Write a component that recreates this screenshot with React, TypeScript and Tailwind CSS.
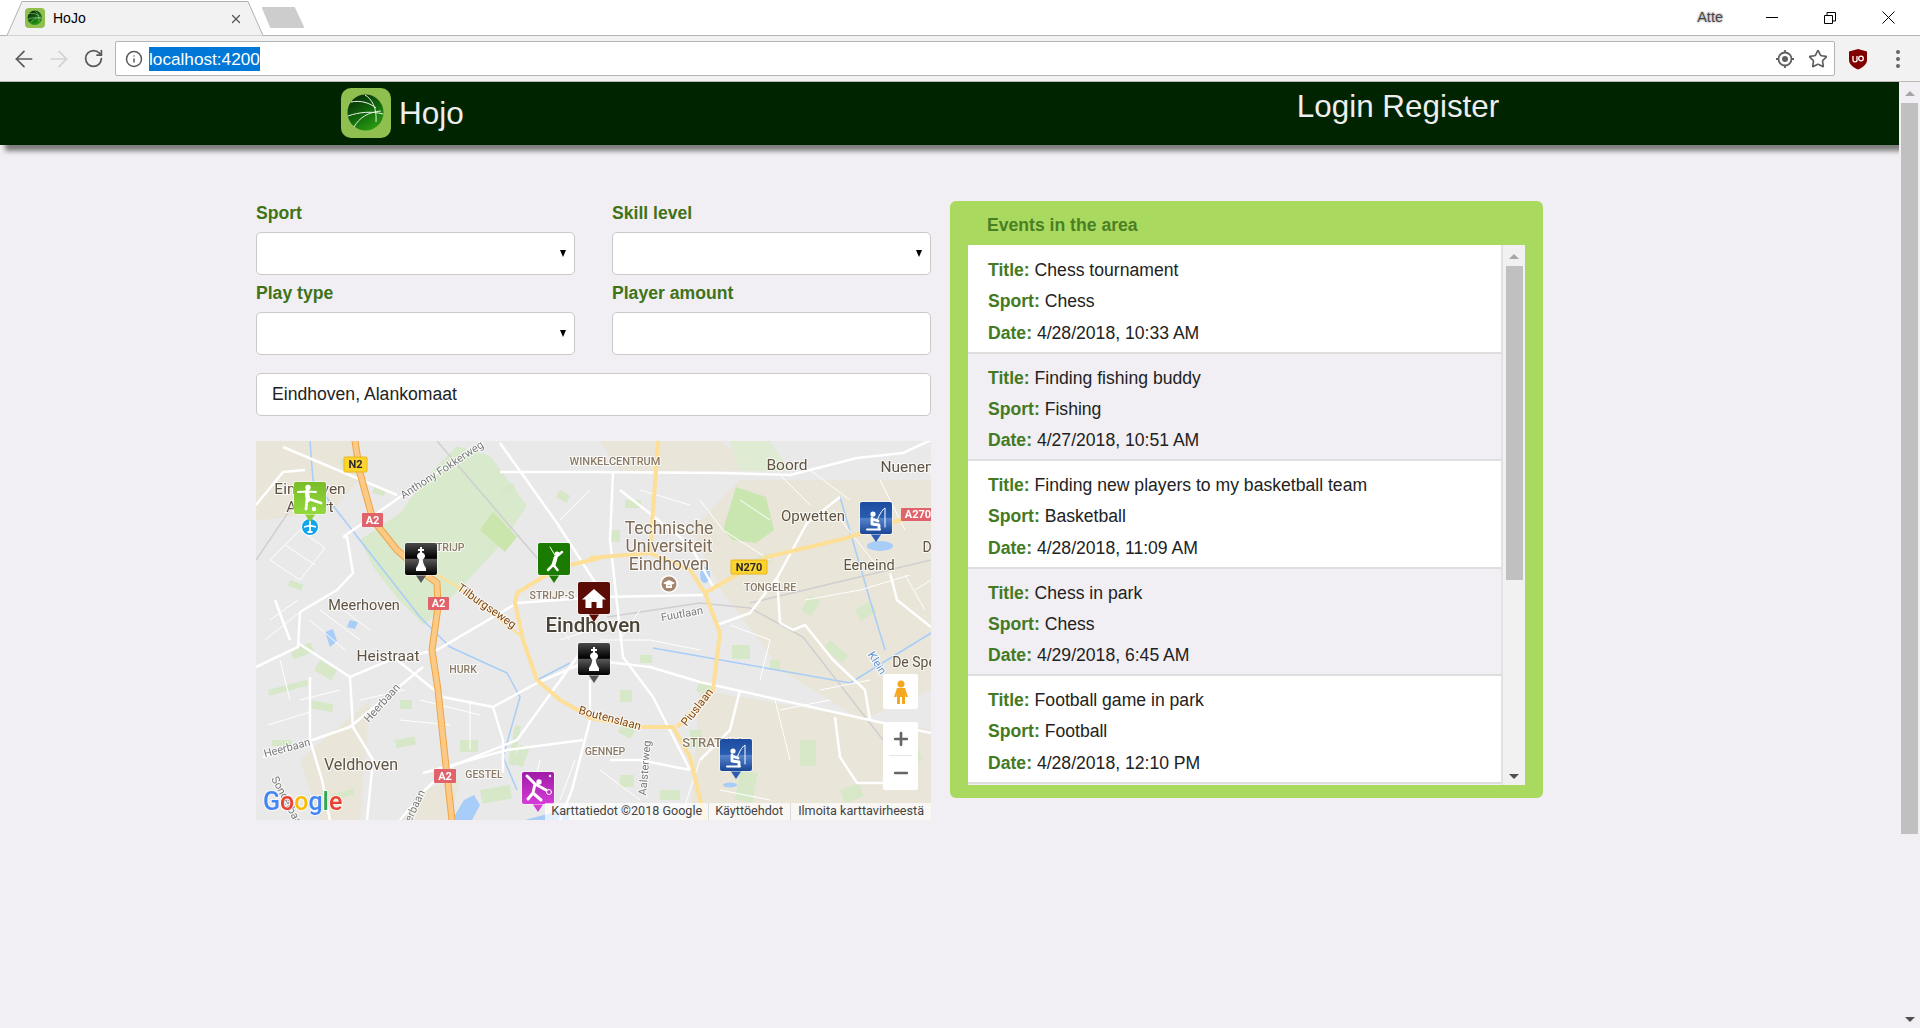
import { ArrowLeft, ArrowRight, Info, Minus, Plus, RotateCw, Star, X } from "lucide-react";
import type { ReactNode } from "react";

type Pt = [number, number];

const line = (points: Pt[]) =>
  "M" + points.map((p) => p[0] + " " + p[1]).join("L");

const events = [
  { title: "Chess tournament", sport: "Chess", date: "4/28/2018, 10:33 AM" },
  { title: "Finding fishing buddy", sport: "Fishing", date: "4/27/2018, 10:51 AM" },
  { title: "Finding new players to my basketball team", sport: "Basketball", date: "4/28/2018, 11:09 AM" },
  { title: "Chess in park", sport: "Chess", date: "4/29/2018, 6:45 AM" },
  { title: "Football game in park", sport: "Football", date: "4/28/2018, 12:10 PM" },
];

const whiteRoads: Pt[][] = [
  [[590, 472], [723, 473], [790, 475], [857, 458], [903, 453], [931, 440]],
  [[500, 472], [590, 472]],
  [[343, 537], [400, 497], [483, 443]],
  [[283, 447], [397, 495]],
  [[256, 505], [283, 472], [305, 470]],
  [[500, 443], [557, 523], [600, 590]],
  [[256, 667], [298, 647], [300, 612], [337, 590], [353, 573], [347, 537], [343, 537]],
  [[437, 650], [517, 603], [600, 597], [703, 595]],
  [[298, 643], [350, 677], [390, 660], [437, 650]],
  [[397, 660], [443, 697], [493, 707], [537, 683], [590, 660]],
  [[423, 667], [350, 727], [263, 757]],
  [[350, 677], [353, 727], [373, 760], [367, 820]],
  [[493, 707], [503, 740], [503, 773]],
  [[423, 773], [507, 750], [583, 740]],
  [[590, 660], [650, 667], [700, 682], [883, 723], [931, 733]],
  [[580, 653], [517, 740], [450, 767], [425, 790], [400, 820]],
  [[613, 473], [610, 540], [623, 657], [653, 697], [690, 770]],
  [[780, 623], [793, 630], [805, 625], [833, 660], [865, 690], [870, 720]],
  [[780, 623], [777, 578], [807, 523], [840, 497]],
  [[717, 625], [750, 613], [777, 578]],
  [[890, 573], [897, 600], [931, 627]],
  [[835, 717], [840, 757], [857, 783], [883, 783]],
  [[610, 760], [640, 760], [690, 770]],
  [[590, 680], [590, 720], [572, 790], [560, 820]],
  [[740, 690], [730, 730], [700, 760]],
  [[275, 600], [290, 640]],
  [[310, 677], [310, 740], [322, 780], [330, 820]],
  [[620, 490], [690, 545], [715, 590]],
];

const thinRoads: Pt[][] = [
  [[270, 560], [300, 580]], [[285, 545], [315, 565]], [[300, 530], [325, 548]], [[270, 560], [300, 530]], [[300, 580], [325, 548]],
  [[270, 620], [298, 600]], [[265, 640], [300, 612]], [[310, 620], [345, 650]], [[320, 610], [360, 640]], [[330, 600], [370, 630]],
  [[280, 660], [290, 700]], [[300, 700], [340, 690]], [[268, 725], [310, 712]], [[360, 700], [405, 690]], [[400, 720], [450, 725]],
  [[590, 490], [560, 520]], [[640, 490], [690, 505]], [[740, 500], [770, 520]], [[780, 475], [810, 505]], [[810, 470], [850, 500]],
  [[833, 510], [880, 570]], [[805, 600], [860, 590]], [[860, 590], [910, 575]], [[905, 575], [925, 610]], [[915, 590], [931, 580]],
  [[700, 500], [723, 530]], [[723, 530], [770, 560]], [[600, 640], [650, 640]], [[650, 640], [700, 650]], [[730, 625], [770, 640]],
  [[770, 640], [760, 680]], [[820, 690], [870, 680]], [[780, 710], [830, 700]], [[775, 700], [790, 760]], [[700, 760], [680, 820]],
  [[720, 790], [770, 800]], [[600, 770], [640, 800]], [[540, 760], [530, 800]], [[575, 760], [560, 800]], [[880, 480], [905, 530]],
  [[470, 700], [470, 750]], [[420, 700], [480, 715]], [[550, 615], [570, 640]], [[560, 640], [590, 630]], [[620, 640], [640, 610]],
];

const greenPatches: number[][] = [
  [340, 460, 16, 9, -20], [375, 485, 12, 8, 20], [500, 490, 14, 7, -30], [290, 650, 22, 10, -20],
  [268, 690, 40, 6, -15], [310, 700, 24, 8, 10], [272, 740, 20, 6, 0], [320, 660, 20, 12, 30],
  [400, 700, 12, 9, 0], [330, 795, 24, 6, -15], [395, 740, 20, 8, -10], [460, 740, 18, 12, 0],
  [480, 790, 30, 14, -10], [515, 725, 6, 40, 10], [620, 690, 12, 12, 0], [640, 655, 12, 8, 0],
  [732, 645, 18, 14, 0], [770, 660, 10, 10, 0], [810, 595, 12, 18, 30], [830, 640, 24, 10, 40],
  [855, 610, 18, 12, -30], [700, 680, 14, 12, 20], [690, 730, 12, 18, 0], [800, 740, 16, 26, 0],
  [740, 770, 18, 30, 10], [840, 790, 20, 14, -20], [895, 755, 24, 14, -20], [625, 720, 14, 14, 30],
  [610, 530, 10, 12, 0], [625, 500, 16, 8, 0], [750, 560, 20, 8, -20], [560, 490, 12, 8, 30],
  [520, 745, 10, 20, 20], [290, 580, 14, 6, 20], [620, 775, 14, 12, 0], [660, 790, 20, 10, 0],
];

const labels: { t: string; x: number; y: number; s: number; c?: string; w?: number; r?: number }[] = [
  { t: "Eindhoven", x: 310, y: 489, s: 15.5 },
  { t: "Airport", x: 310, y: 507, s: 15.5 },
  { t: "WINKELCENTRUM", x: 615, y: 461, s: 11, c: "#8a7a66", w: 500 },
  { t: "Boord", x: 787, y: 465, s: 15.5 },
  { t: "Nuenen", x: 907, y: 467, s: 15.5 },
  { t: "Opwetten", x: 813, y: 516, s: 15 },
  { t: "Technische", x: 669, y: 528, s: 17.5, c: "#7d6a55" },
  { t: "Universiteit", x: 669, y: 546, s: 17.5, c: "#7d6a55" },
  { t: "Eindhoven", x: 669, y: 564, s: 17.5, c: "#7d6a55" },
  { t: "TONGELRE", x: 770, y: 587, s: 10.5, c: "#8a7a66", w: 500 },
  { t: "Eeneind", x: 869, y: 565, s: 14.5 },
  { t: "D", x: 927, y: 547, s: 14 },
  { t: "De Spe", x: 914, y: 662, s: 14 },
  { t: "Klein", x: 877, y: 663, s: 11, c: "#5f93d0", r: 58 },
  { t: "Fuutlaan", x: 682, y: 614, s: 11, c: "#7a7a7a", r: -10 },
  { t: "Eindhoven", x: 593, y: 625, s: 20.5, c: "#4a4234", w: 500 },
  { t: "STRIJP-S", x: 552, y: 595, s: 10.5, c: "#8a7a66", w: 500 },
  { t: "STRIJP", x: 447, y: 547, s: 10.5, c: "#8a7a66", w: 500 },
  { t: "Meerhoven", x: 364, y: 605, s: 14.5 },
  { t: "Heistraat", x: 388, y: 656, s: 15.5 },
  { t: "HURK", x: 463, y: 669, s: 10.5, c: "#8a7a66", w: 500 },
  { t: "Veldhoven", x: 361, y: 764, s: 16 },
  { t: "GESTEL", x: 484, y: 774, s: 10.5, c: "#8a7a66", w: 500 },
  { t: "GENNEP", x: 605, y: 751, s: 10.5, c: "#8a7a66", w: 500 },
  { t: "STRATUM", x: 712, y: 742, s: 13, c: "#8a7a66", w: 500 },
  { t: "Tilburgseweg", x: 487, y: 606, s: 11.5, c: "#84480f", r: 35 },
  { t: "Boutenslaan", x: 610, y: 718, s: 11.5, c: "#84480f", r: 15 },
  { t: "Piuslaan", x: 697, y: 707, s: 11.5, c: "#84480f", r: -52 },
  { t: "Anthony Fokkerweg", x: 442, y: 470, s: 11, c: "#7a7a7a", r: -33 },
  { t: "Heerbaan", x: 382, y: 703, s: 11, c: "#7a7a7a", r: -48 },
  { t: "Heerbaan", x: 287, y: 748, s: 11, c: "#7a7a7a", r: -15 },
  { t: "Sonderbaan", x: 288, y: 803, s: 11, c: "#7a7a7a", r: 62 },
  { t: "Aalsterweg", x: 645, y: 768, s: 11, c: "#7a7a7a", r: -85 },
  { t: "Heerbaan", x: 412, y: 812, s: 11, c: "#7a7a7a", r: -65 },
];

const shields: { t: string; x: number; y: number; w: number; h: number; yellow?: boolean }[] = [
  { t: "N2", x: 344, y: 457, w: 23, h: 15, yellow: true },
  { t: "A2", x: 362, y: 513, w: 21, h: 14 },
  { t: "A2", x: 428, y: 597, w: 21, h: 13 },
  { t: "A2", x: 434, y: 769, w: 22, h: 14 },
  { t: "N270", x: 731, y: 560, w: 36, h: 14, yellow: true },
  { t: "A270", x: 901, y: 508, w: 34, h: 13 },
];

const LogoBall = ({ size }: { size: number }) => (
  <svg width={size} height={size} viewBox="0 0 50 50" className="block shrink-0">
    <defs>
      <linearGradient id={"ball" + size} x1="0.2" y1="0" x2="0.8" y2="1">
        <stop offset="0" stopColor="#052a05" />
        <stop offset="0.55" stopColor="#136d0c" />
        <stop offset="1" stopColor="#2ea312" />
      </linearGradient>
    </defs>
    <rect width="50" height="50" rx="10" fill="#90bf50" />
    <circle cx="24.500" cy="24.500" r="18" fill={"url(#ball" + size + ")"} />
    <g fill="none" stroke="#e8f0e4" strokeWidth="1">
      <path d="M10 14c10-2 19 1 25 6" />
      <path d="M7 28c11-4 24-5 35-2" />
      <path d="M24 7c7 4 12 13 11 27" />
      <path d="M13 39c5-9 14-15 27-16" />
    </g>
  </svg>
);

const Marker = ({ x, y, fill, tip, children }: { x: number; y: number; fill: string; tip: string; children: ReactNode }) => (
  <g transform={`translate(${x} ${y})`}>
    <path d="M10 31 16 40 22 31z" fill={tip} />
    <rect x="-0.500" y="-0.500" width="33" height="33" rx="2.500" fill="none" stroke="#fff" strokeOpacity="0.45" />
    <rect width="32" height="32" rx="2" fill={fill} />
    <g fill="#fff" stroke="#fff" strokeLinecap="round" strokeLinejoin="round">
      {children}
    </g>
  </g>
);

const ChessIcon = () => (
  <path
    strokeWidth="0"
    d="M15 4h2v2h2v2h-2v1.500c2 .6 3 2 3 3.600 0 1.600-1 2.700-2.300 3.400.3 3.200 1.300 6 3.300 8.500v3H11v-3c2-2.500 3-5.300 3.300-8.500C13 15.800 12 14.700 12 13.100c0-1.600 1-3 3-3.600V8h-2V6h2z"
  />
);

const FishingIcon = () => (
  <>
    <circle cx="13" cy="12" r="2.600" strokeWidth="0" />
    <path d="M12 16v6l7 1v4M12 17l6 2" strokeWidth="2.800" fill="none" />
    <path d="M7 27.500h13" strokeWidth="2" fill="none" />
    <path d="M17 19c2-6 5-11 8-13v19" strokeWidth="1" fill="none" />
  </>
);

const MapCanvas = () => (
  <svg viewBox="256 441 675 379" className="block h-full w-full font-['Roboto'] blur-[0.35px]">
    <defs>
      <linearGradient id="chess" x1="0" y1="0" x2="0" y2="1">
        <stop offset="0" stopColor="#4a4a4a" />
        <stop offset="0.48" stopColor="#000" />
        <stop offset="0.5" stopColor="#5a5a5a" />
        <stop offset="1" stopColor="#000" />
      </linearGradient>
      <linearGradient id="fish" x1="0" y1="0" x2="0" y2="1">
        <stop offset="0" stopColor="#1b4c9f" />
        <stop offset="0.48" stopColor="#2a5db0" />
        <stop offset="0.52" stopColor="#5583cc" />
        <stop offset="1" stopColor="#1a4696" />
      </linearGradient>
      <linearGradient id="soccer" x1="0" y1="0" x2="0" y2="1">
        <stop offset="0" stopColor="#78bd28" />
        <stop offset="1" stopColor="#93d83e" />
      </linearGradient>
      <linearGradient id="tennis" x1="0" y1="0" x2="0" y2="1">
        <stop offset="0" stopColor="#a01ba6" />
        <stop offset="1" stopColor="#d43cd6" />
      </linearGradient>
    </defs>
    <rect x="256" y="441" width="675" height="379" fill="#e9e9e9" />
    <g fill="#e9e5d9">
      <path d="M256 441h100l6 35-30 35-76 10z" />
      <path d="M740 480h191v210l-70 30-80-50-60-80-30-60z" />
      <path d="M700 690l231 40v90H690z" />
      <path d="M370 700l-10 120h-40l-20-60zM420 790l40-10-10 40h-50z" />
      <path d="M600 441h120l40 30H620z" />
    </g>
    <path d="M360 540l40-27 30-40 27-27 33 10 37 50-20 30-13 16-40 43-30 30-27-27-23-30z" fill="#d8e9cc" />
    <path d="M480 530l13-18 24 25-12 15z" fill="#cbe6ac" />
    <path d="M723 530l13-43 30 10 8 33-18 13-23-3z" fill="#c9e5b0" />
    <path d="M730 441h40l20 30h-50z" fill="#dfecd3" />
    <g fill="#d6e8c8">
      {greenPatches.map((p, i) => (
        <rect key={i} x={p[0]} y={p[1]} width={p[2]} height={p[3]} transform={`rotate(${p[4]} ${p[0]} ${p[1]})`} />
      ))}
    </g>
    <g fill="none" stroke="#a8cdf8" strokeWidth="1.500" strokeLinejoin="round">
      <path d={line([[653, 648], [850, 683], [931, 633]])} />
      <path d={line([[310, 441], [313, 480], [420, 617], [450, 647], [507, 673], [520, 697], [503, 757], [517, 790]])} />
      <path d={line([[537, 680], [570, 663]])} />
      <path d={line([[840, 497], [870, 600], [885, 650]])} />
    </g>
    <g fill="#a8cdf8">
      <ellipse cx="880" cy="546" rx="13" ry="5" />
      <path d="M525 820l30-8 14-5v13zM464 800l10-5 6 10-8 15h-20z" />
      <ellipse cx="705" cy="575" rx="5" ry="8" />
      <ellipse cx="730" cy="785" rx="7" ry="2.500" />
      <path d="M325 632l8-3 4 12-7 6zM350 620l8 2-3 7-8-2z" />
    </g>
    <g fill="none" stroke="#cfcfcf" strokeWidth="1.500">
      <path d={line([[607, 617], [700, 603], [750, 608], [803, 637], [883, 740]])} />
      <path d={line([[750, 603], [931, 560]])} />
      <path d={line([[437, 441], [550, 573]])} />
      <path d={line([[256, 560], [300, 495]])} />
    </g>
    <g fill="none" stroke="#fff" strokeWidth="1" strokeLinejoin="round">
      {thinRoads.map((r, i) => (
        <path key={i} d={line(r)} />
      ))}
    </g>
    <g fill="none" stroke="#fff" strokeWidth="2.500" strokeLinejoin="round">
      {whiteRoads.map((r, i) => (
        <path key={i} d={line(r)} />
      ))}
    </g>
    <g fill="none" stroke="#fddf97" strokeWidth="4" strokeLinejoin="round">
      <path d={line([[600, 558], [570, 565], [543, 577], [517, 593], [515, 603], [523, 640], [537, 680], [560, 700], [583, 713], [590, 718], [643, 727], [673, 727], [690, 757], [705, 820]])} />
      <path d={line([[658, 441], [650, 553], [590, 558]])} />
      <path d={line([[650, 553], [690, 570], [705, 593], [720, 633], [713, 690], [677, 727]])} />
      <path d={line([[705, 593], [767, 557], [847, 538], [900, 520], [931, 512]])} />
      <path d={line([[437, 575], [455, 585], [520, 635]])} strokeWidth="2.500" />
    </g>
    <g fill="none" strokeLinejoin="round">
      <path d={line([[355, 441], [360, 473], [373, 520], [397, 550], [420, 570], [437, 583], [438, 607], [432, 650], [438, 690], [445, 757], [452, 820]])} stroke="#eda548" strokeWidth="7" />
      <path d={line([[355, 441], [360, 473], [373, 520], [397, 550], [420, 570], [437, 583], [438, 607], [432, 650], [438, 690], [445, 757], [452, 820]])} stroke="#fdca86" strokeWidth="5" />
    </g>
    {labels.map((l, i) => (
      <text
        key={i}
        x={l.x}
        y={l.y}
        fontSize={l.s}
        fontWeight={l.w ?? 400}
        fill={l.c ?? "#5f5240"}
        textAnchor="middle"
        dominantBaseline="central"
        stroke="#fff"
        strokeOpacity="0.75"
        strokeWidth="2"
        paintOrder="stroke"
        transform={l.r ? `rotate(${l.r} ${l.x} ${l.y})` : undefined}
      >
        {l.t}
      </text>
    ))}
    {shields.map((s, i) => (
      <g key={i}>
        <rect x={s.x} y={s.y} width={s.w} height={s.h} rx="1" fill={s.yellow ? "#fdd32e" : "#e0626a"} stroke={s.yellow ? "#e8b820" : "none"} />
        <text
          x={s.x + s.w / 2}
          y={s.y + s.h / 2}
          fontSize="11"
          fontWeight="700"
          fill={s.yellow ? "#2a2a2a" : "#fff"}
          textAnchor="middle"
          dominantBaseline="central"
        >
          {s.t}
        </text>
      </g>
    ))}
    <circle cx="310" cy="527" r="9" fill="#fff" />
    <circle cx="310" cy="527" r="8" fill="#12a5ea" />
    <path d="M310 521v11M304 527l6-1.500 6 1.500M307.500 532h5" stroke="#fff" strokeWidth="1.800" fill="none" />
    <circle cx="669" cy="584" r="9" fill="#fff" />
    <circle cx="669" cy="584" r="7.500" fill="#a5856e" />
    <path d="M663 583l6-3 6 3-6 3zM666 585v3h6v-3" fill="#fff" />

    <Marker x={294} y={482} fill="url(#soccer)" tip="#8ccf36">
      <circle cx="14" cy="5.500" r="2.700" strokeWidth="0" />
      <path d="M4 10l9-.5 9 .5" strokeWidth="2" fill="none" />
      <path d="M13 10l1 8" strokeWidth="4.500" fill="none" />
      <path d="M15 17l12 4M13 18l-1 9" strokeWidth="2.800" fill="none" />
      <circle cx="20" cy="27" r="2.200" strokeWidth="0" />
    </Marker>
    <Marker x={405} y={543} fill="url(#chess)" tip="#555">
      <ChessIcon />
    </Marker>
    <Marker x={538} y={543} fill="#1b7a00" tip="#1b7a00">
      <circle cx="19" cy="11" r="2.400" strokeWidth="0" />
      <path d="M17.500 15l-2 7" strokeWidth="4" fill="none" />
      <path d="M15 22l-5 5M15.500 22l4 5M18 14l6-5" strokeWidth="2.500" fill="none" />
      <path d="M12 4l6 10" strokeWidth="1" fill="none" />
    </Marker>
    <Marker x={578} y={582} fill="#5b0c05" tip="#5b0c05">
      <path d="M16 7 4 17.500h3.500V26h6v-6h5v6h6v-8.500H28z" strokeWidth="0" />
    </Marker>
    <Marker x={578} y={643} fill="url(#chess)" tip="#555">
      <ChessIcon />
    </Marker>
    <Marker x={860} y={502} fill="url(#fish)" tip="#2a5db0">
      <FishingIcon />
    </Marker>
    <Marker x={720} y={739} fill="url(#fish)" tip="#2a5db0">
      <FishingIcon />
    </Marker>
    <Marker x={522} y={772} fill="url(#tennis)" tip="#d43cd6">
      <circle cx="17" cy="10" r="2.700" strokeWidth="0" />
      <path d="M5 4l8 8-2 9-5 6M11 21l8 7M13 12l11 6" strokeWidth="3" fill="none" />
      <circle cx="27" cy="20" r="2.500" fill="none" strokeWidth="1" />
      <circle cx="28" cy="4" r="1.200" strokeWidth="0" />
    </Marker>

    <text x="263" y="810" fontSize="25" fontWeight="500" stroke="#fff" strokeOpacity="0.7" strokeWidth="2" paintOrder="stroke">
      <tspan fill="#4285f4">G</tspan>
      <tspan fill="#ea4335">o</tspan>
      <tspan fill="#fbbc05">o</tspan>
      <tspan fill="#4285f4">g</tspan>
      <tspan fill="#34a853">l</tspan>
      <tspan fill="#ea4335">e</tspan>
    </text>
  </svg>
);

const SelectField = ({ label }: { label: string }) => (
  <div>
    <label className="block h-5 text-[17.6px] leading-5 font-bold text-[#3f7318]">{label}</label>
    <div className="relative mt-[9px]">
      <select className="block h-[43px] w-full appearance-none rounded-[5px] border border-[#c9c9c9] bg-white">
        <option></option>
      </select>
      <div className="absolute top-[18px] right-[9px] h-0 w-0 border-x-[3.5px] border-t-[7px] border-x-transparent border-t-black" />
    </div>
  </div>
);

const EventRow = ({ title, sport, date, odd }: { title: string; sport: string; date: string; odd: boolean }) => (
  <div className={"flex h-[107.5px] shrink-0 flex-col gap-[11.3px] border-b-2 border-[#dedede] pt-[14px] pl-5 text-[17.6px] leading-5 text-[#222] " + (odd ? "bg-white" : "bg-[#f1eff3]")}>
    <div>
      <b className="text-[#437a22]">Title:</b> {title}
    </div>
    <div>
      <b className="text-[#437a22]">Sport:</b> {sport}
    </div>
    <div>
      <b className="text-[#437a22]">Date:</b> {date}
    </div>
  </div>
);

const TabStrip = () => (
  <div className="relative flex h-9 items-center border-b border-[#b4b4b4] bg-white">
    <div className="relative z-10 ml-[7px] flex h-9 w-[256px] items-center self-start pl-[18px] text-sm text-black">
      <svg viewBox="0 0 256 36" className="absolute inset-0 h-full w-full">
        <path d="M0 35.500 15 1.500H241L256 35.500" fill="#f2f2f2" stroke="#b0b0b0" />
      </svg>
      <span className="relative flex items-center gap-2">
        <LogoBall size={20} />
        HoJo
      </span>
      <X size={14} strokeWidth={2.2} className="absolute right-[20px] top-[12px] text-[#555]" />
    </div>
    <svg width="42" height="24" viewBox="0 0 42 24" className="-ml-px mb-[2px] shrink-0">
      <path d="M1 3h31l9 19H9z" fill="#cdcdcd" stroke="#cdcdcd" strokeWidth="2" strokeLinejoin="round" />
    </svg>
    <div className="flex-1" />
    <span className="mr-5 text-[14.5px] text-[#444] [text-shadow:0_0_1px_#fff,0_0_2px_#555]">Atte</span>
    <div className="mr-[3px] flex">
      <div className="flex h-9 w-[58px] items-center justify-center">
        <div className="h-px w-3 bg-black" />
      </div>
      <div className="flex h-9 w-[58px] items-center justify-center">
        <svg width="12" height="12" viewBox="0 0 12 12" fill="none" stroke="#000">
          <path d="M.5 3.500h8v8h-8zM3 3.500V.5h8.500V9H8.500" />
        </svg>
      </div>
      <div className="flex h-9 w-[58px] items-center justify-center">
        <svg width="13" height="13" viewBox="0 0 13 13" stroke="#000">
          <path d="M.5.5l12 12M12.500.5l-12 12" />
        </svg>
      </div>
    </div>
  </div>
);

const Toolbar = () => (
  <div className="flex h-[46px] items-center border-b border-[#b9b9b9] bg-[#f2f2f2]">
    <div className="flex w-[115px] items-center pl-[6px]">
      <div className="flex w-[35px] justify-center text-[#5a5a5a]">
        <ArrowLeft size={26} strokeWidth={1.6} />
      </div>
      <div className="flex w-[35px] justify-center text-[#d2d2d2]">
        <ArrowRight size={26} strokeWidth={1.6} />
      </div>
      <div className="flex w-[35px] justify-center text-[#5a5a5a]">
        <RotateCw size={21} strokeWidth={2} />
      </div>
    </div>
    <div className="flex h-[35px] min-w-0 flex-1 items-center rounded-[2px] border border-[#b4b4b4] bg-white pr-[6px] pl-[9px]">
      <Info size={18} strokeWidth={2} className="text-[#5a5a5a]" />
      <span className="ml-[6px] h-6 bg-[#0078d7] text-[17.2px] leading-6 text-white">localhost:4200</span>
      <div className="flex-1" />
      <svg width="20" height="20" viewBox="0 0 20 20" fill="none" stroke="#5f5f5f" strokeWidth="1.800">
        <circle cx="10" cy="10" r="6.500" />
        <circle cx="10" cy="10" r="3" fill="#5f5f5f" stroke="none" />
        <path d="M10 1v2.500M10 16.500V19M1 10h2.500M16.500 10H19" />
      </svg>
      <Star size={20} strokeWidth={2} className="ml-[13px] text-[#5f5f5f]" />
    </div>
    <div className="relative flex w-[85px] items-center">
      <svg width="20" height="22" viewBox="0 0 20 22" className="ml-[13px]">
        <path d="M10 1 19 3.500V12c0 4-4 7.500-9 9.500C5 19.500 1 16 1 12V3.500z" fill="#800000" />
        <path d="M5 8v4c0 2.500 4 2.500 4 0V8" fill="none" stroke="#fff" strokeWidth="1.300" />
        <circle cx="13" cy="10.500" r="2.300" fill="none" stroke="#fff" strokeWidth="1.300" />
      </svg>
      <div className="ml-[28px] flex flex-col gap-[3px]">
        <div className="h-[4px] w-[4px] rounded-full bg-[#666]" />
        <div className="h-[4px] w-[4px] rounded-full bg-[#666]" />
        <div className="h-[4px] w-[4px] rounded-full bg-[#666]" />
      </div>
    </div>
  </div>
);

const PageScrollbar = () => (
  <div className="flex w-[21px] shrink-0 flex-col items-center bg-[#f1eff3] pt-[9px]">
    <div className="h-0 w-0 border-x-[5px] border-b-[5px] border-x-transparent border-b-[#a6a6a6]" />
    <div className="mt-[7px] h-[731px] w-[17px] bg-[#c0c0c0]" />
    <div className="flex-1" />
    <div className="mb-[6px] h-0 w-0 border-x-[5px] border-t-[5px] border-x-transparent border-t-[#505050]" />
  </div>
);

export default function App() {
  return (
    <div className="flex h-screen w-full flex-col overflow-hidden bg-[#f1eff3] font-['Liberation_Sans',sans-serif]">
      <TabStrip />
      <Toolbar />
      <div className="flex min-h-0 flex-1">
        <div className="min-w-0 flex-1 overflow-hidden">
          <header className="relative flex h-[63px] items-start bg-[#002300] pl-[341px] text-white shadow-[5px_6px_5px_#7c7c7c]">
            <div className="mt-[6px]">
              <LogoBall size={50} />
            </div>
            <span className="ml-[8px] mt-[11px] text-[31.5px] leading-[40px] text-[#eee]">Hojo</span>
            <span className="ml-[833px] mt-[5px] text-[31.4px] leading-[40px] text-[#eee]">Login Register</span>
          </header>
          <main className="flex items-start gap-[19px] pt-[56px] pl-[256px]">
            <div className="w-[675px] pt-[2px]">
              <div className="grid grid-cols-2 gap-x-[37px] gap-y-[8px]">
                <SelectField label="Sport" />
                <SelectField label="Skill level" />
                <SelectField label="Play type" />
                <div>
                  <label className="block h-5 text-[17.6px] leading-5 font-bold text-[#3f7318]">Player amount</label>
                  <input className="mt-[9px] block h-[43px] w-full rounded-[5px] border border-[#c9c9c9] bg-white" />
                </div>
              </div>
              <input
                className="mt-[18px] block h-[43px] w-full rounded-[5px] border border-[#c9c9c9] bg-white px-[15px] text-[17.6px] text-[#222]"
                defaultValue="Eindhoven, Alankomaat"
              />
              <div className="relative mt-[25px] h-[379px] w-full overflow-hidden">
                <MapCanvas />
                <div className="absolute top-[233px] right-[13px] flex h-[35px] w-[35px] items-center justify-center rounded-[2px] bg-white">
                  <svg width="14" height="24" viewBox="0 0 14 24">
                    <circle cx="7" cy="4" r="3.500" fill="#f5a81f" />
                    <path d="M3 8h8l3 9h-2.500l-.5-3v10H8v-7H6v7H3V14l-.5 3H0z" fill="#f5a81f" />
                  </svg>
                </div>
                <div className="absolute top-[281px] right-[13px] flex h-[68px] w-[35px] flex-col items-center rounded-[2px] bg-white text-[#666]">
                  <div className="flex h-[33px] items-center">
                    <Plus size={20} strokeWidth={3.2} />
                  </div>
                  <div className="h-px w-[23px] bg-[#e6e6e6]" />
                  <div className="flex h-[34px] items-center">
                    <Minus size={20} strokeWidth={3.2} />
                  </div>
                </div>
                <div className="absolute right-0 bottom-0 flex h-[17px] items-center whitespace-nowrap bg-white/70 pr-[7px] pl-[6px] font-['Roboto'] text-[12.6px] text-[#444]">
                  <span>Karttatiedot ©2018 Google</span>
                  <div className="mx-[6px] h-full w-px bg-[#ddd]" />
                  <span>Käyttöehdot</span>
                  <div className="mx-[7px] h-full w-px bg-[#ddd]" />
                  <span>Ilmoita karttavirheestä</span>
                </div>
              </div>
            </div>
            <section className="h-[597px] w-[593px] rounded-[6px] bg-[#aad960] px-[18px]">
              <h2 className="h-[44px] pl-[19px] text-[17.6px] leading-[48px] font-bold text-[#4a8024]">Events in the area</h2>
              <div className="flex h-[540px] overflow-hidden bg-[#f1f1f1]">
                <div className="flex min-w-0 flex-1 flex-col border-r-2 border-[#e2e2e2] bg-white pt-px">
                  {events.map((e, i) => (
                    <EventRow key={e.title} title={e.title} sport={e.sport} date={e.date} odd={i % 2 === 0} />
                  ))}
                  <div className="flex-1 bg-[#f1eff3]" />
                </div>
                <div className="flex w-[22px] shrink-0 flex-col items-center pt-[9px]">
                  <div className="h-0 w-0 border-x-[5px] border-b-[5px] border-x-transparent border-b-[#a6a6a6]" />
                  <div className="mt-[7px] h-[314px] w-[17px] bg-[#c0c0c0]" />
                  <div className="flex-1" />
                  <div className="mb-[6px] h-0 w-0 border-x-[5px] border-t-[5px] border-x-transparent border-t-[#505050]" />
                </div>
              </div>
            </section>
          </main>
        </div>
        <PageScrollbar />
      </div>
    </div>
  );
}
